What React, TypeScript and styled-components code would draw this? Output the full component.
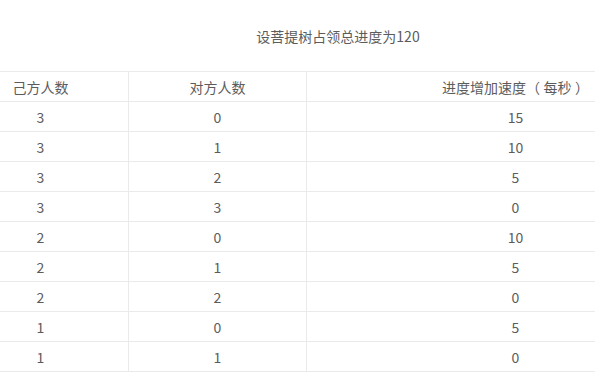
import styled, { createGlobalStyle } from "styled-components";

const GlobalStyle = createGlobalStyle`
  html, body {
    margin: 0;
    padding: 0;
    background: #fff;
    overflow: hidden;
  }
  body {
    font-family: "Noto Sans CJK SC", "Noto Sans", sans-serif;
    color: #5c5c5c;
  }
`;

const Page = styled.div`
  width: 772px;
  margin-left: -48px;
`;

const Title = styled.h3`
  margin: 0;
  height: 71px;
  display: flex;
  align-items: center;
  justify-content: center;
  font-size: 14px;
  font-weight: 400;
  color: #5c5c5c;
`;

const Table = styled.table`
  width: 772px;
  border-collapse: collapse;
  table-layout: fixed;
  font-size: 14px;
`;

const Col = styled.col<{ $w: number }>`
  width: ${(p) => p.$w}px;
`;

const HeadCell = styled.th`
  height: 29px;
  padding: 0;
  font-weight: 400;
  text-align: center;
  border: 1px solid #e8eaec;
  color: #5c5c5c;
`;

const Cell = styled.td`
  height: 29px;
  padding: 0;
  text-align: center;
  border: 1px solid #e8eaec;
`;

const rows: [number, number, number][] = [
  [3, 0, 15],
  [3, 1, 10],
  [3, 2, 5],
  [3, 3, 0],
  [2, 0, 10],
  [2, 1, 5],
  [2, 2, 0],
  [1, 0, 5],
  [1, 1, 0],
];

export default function App() {
  return (
    <>
      <GlobalStyle />
      <Page>
        <Title>设菩提树占领总进度为120</Title>
        <Table>
          <colgroup>
            <Col $w={176} />
            <Col $w={178} />
            <Col $w={418} />
          </colgroup>
          <thead>
            <tr>
              <HeadCell>己方人数</HeadCell>
              <HeadCell>对方人数</HeadCell>
              <HeadCell>进度增加速度（{"\u2005"}每秒{"\u2005"}）</HeadCell>
            </tr>
          </thead>
          <tbody>
            {rows.map((r, i) => (
              <tr key={i}>
                <Cell>{r[0]}</Cell>
                <Cell>{r[1]}</Cell>
                <Cell>{r[2]}</Cell>
              </tr>
            ))}
          </tbody>
        </Table>
      </Page>
    </>
  );
}
